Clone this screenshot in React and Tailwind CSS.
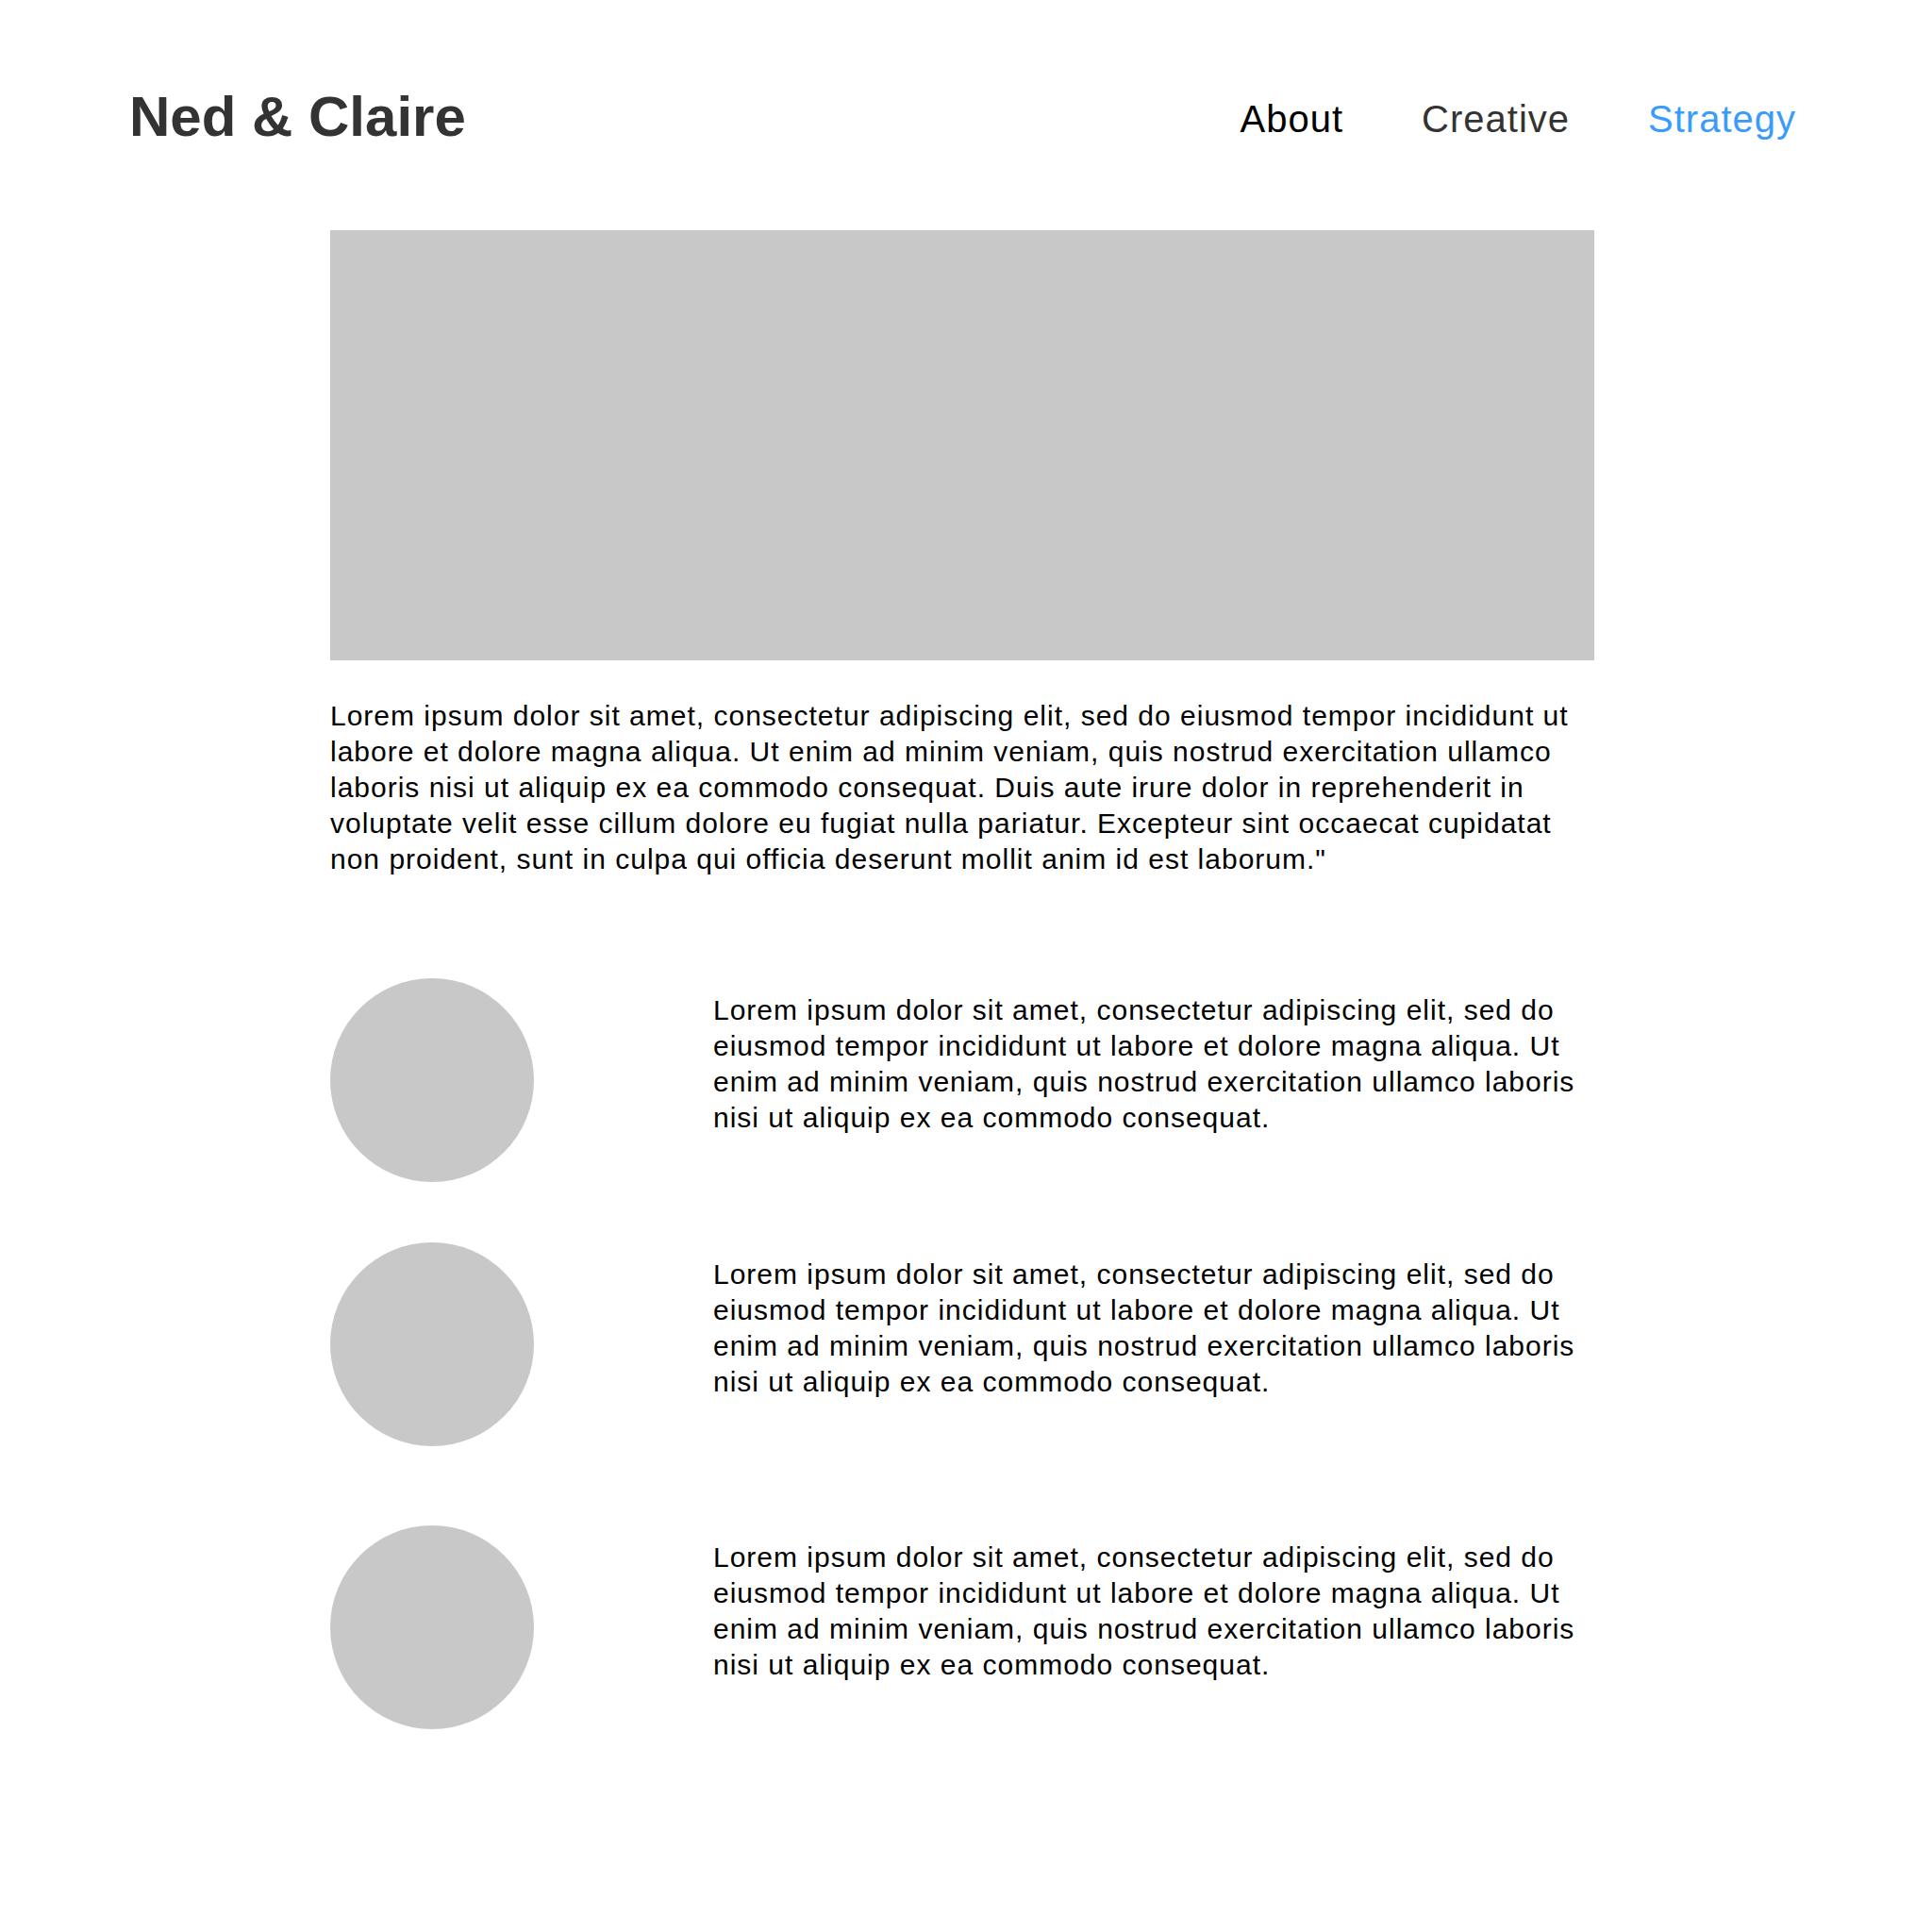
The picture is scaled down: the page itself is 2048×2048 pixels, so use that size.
import React from 'react';

const LOREM_LONG =
  'Lorem ipsum dolor sit amet, consectetur adipiscing elit, sed do eiusmod tempor incididunt ut labore et dolore magna aliqua. Ut enim ad minim veniam, quis nostrud exercitation ullamco laboris nisi ut aliquip ex ea commodo consequat. Duis aute irure dolor in reprehenderit in voluptate velit esse cillum dolore eu fugiat nulla pariatur. Excepteur sint occaecat cupidatat non proident, sunt in culpa qui officia deserunt mollit anim id est laborum."';

const LOREM_SHORT =
  'Lorem ipsum dolor sit amet, consectetur adipiscing elit, sed do eiusmod tempor incididunt ut labore et dolore magna aliqua. Ut enim ad minim veniam, quis nostrud exercitation ullamco laboris nisi ut aliquip ex ea commodo consequat.';

// jarak antar baris tidak sama di desain aslinya
const rows = [
  { id: 1, spacing: 'mt-[107px]' },
  { id: 2, spacing: 'mt-[64px]' },
  { id: 3, spacing: 'mt-[84px]' },
];

export default function App() {
  return (
    <div className="min-h-screen bg-white text-black font-['Liberation_Sans',Arial,sans-serif]">
      {/* Header */}
      <header className="flex items-center justify-between pl-[137px] pr-[144px] pt-[94px]">
        <h1 className="text-[60px] leading-[60px] font-bold text-[#333333]">Ned &amp; Claire</h1>
        <nav className="flex items-center gap-[83px] mt-[3px] text-[40px] leading-none tracking-[1px]">
          <a href="#" className="text-black">About</a>
          <a href="#" className="text-[#333333]">Creative</a>
          <a href="#" className="text-[#3a9bfb]">Strategy</a>
        </nav>
      </header>

      <main className="w-[1340px] ml-[350px] pt-[90px] pb-[200px]">
        {/* Hero */}
        <div className="h-[456px] bg-[#c8c8c8]"></div>

        <p className="mt-[40px] text-[30px] leading-[38px] tracking-[1px]">{LOREM_LONG}</p>

        {/* Rows */}
        {rows.map((row) => (
          <div key={row.id} className={`flex ${row.spacing}`}>
            <div className="w-[406px] shrink-0">
              <div className="w-[216px] h-[216px] rounded-full bg-[#c8c8c8]"></div>
            </div>
            <p className="pt-[15px] text-[30px] leading-[38px] tracking-[1px]">{LOREM_SHORT}</p>
          </div>
        ))}
      </main>
    </div>
  );
}
